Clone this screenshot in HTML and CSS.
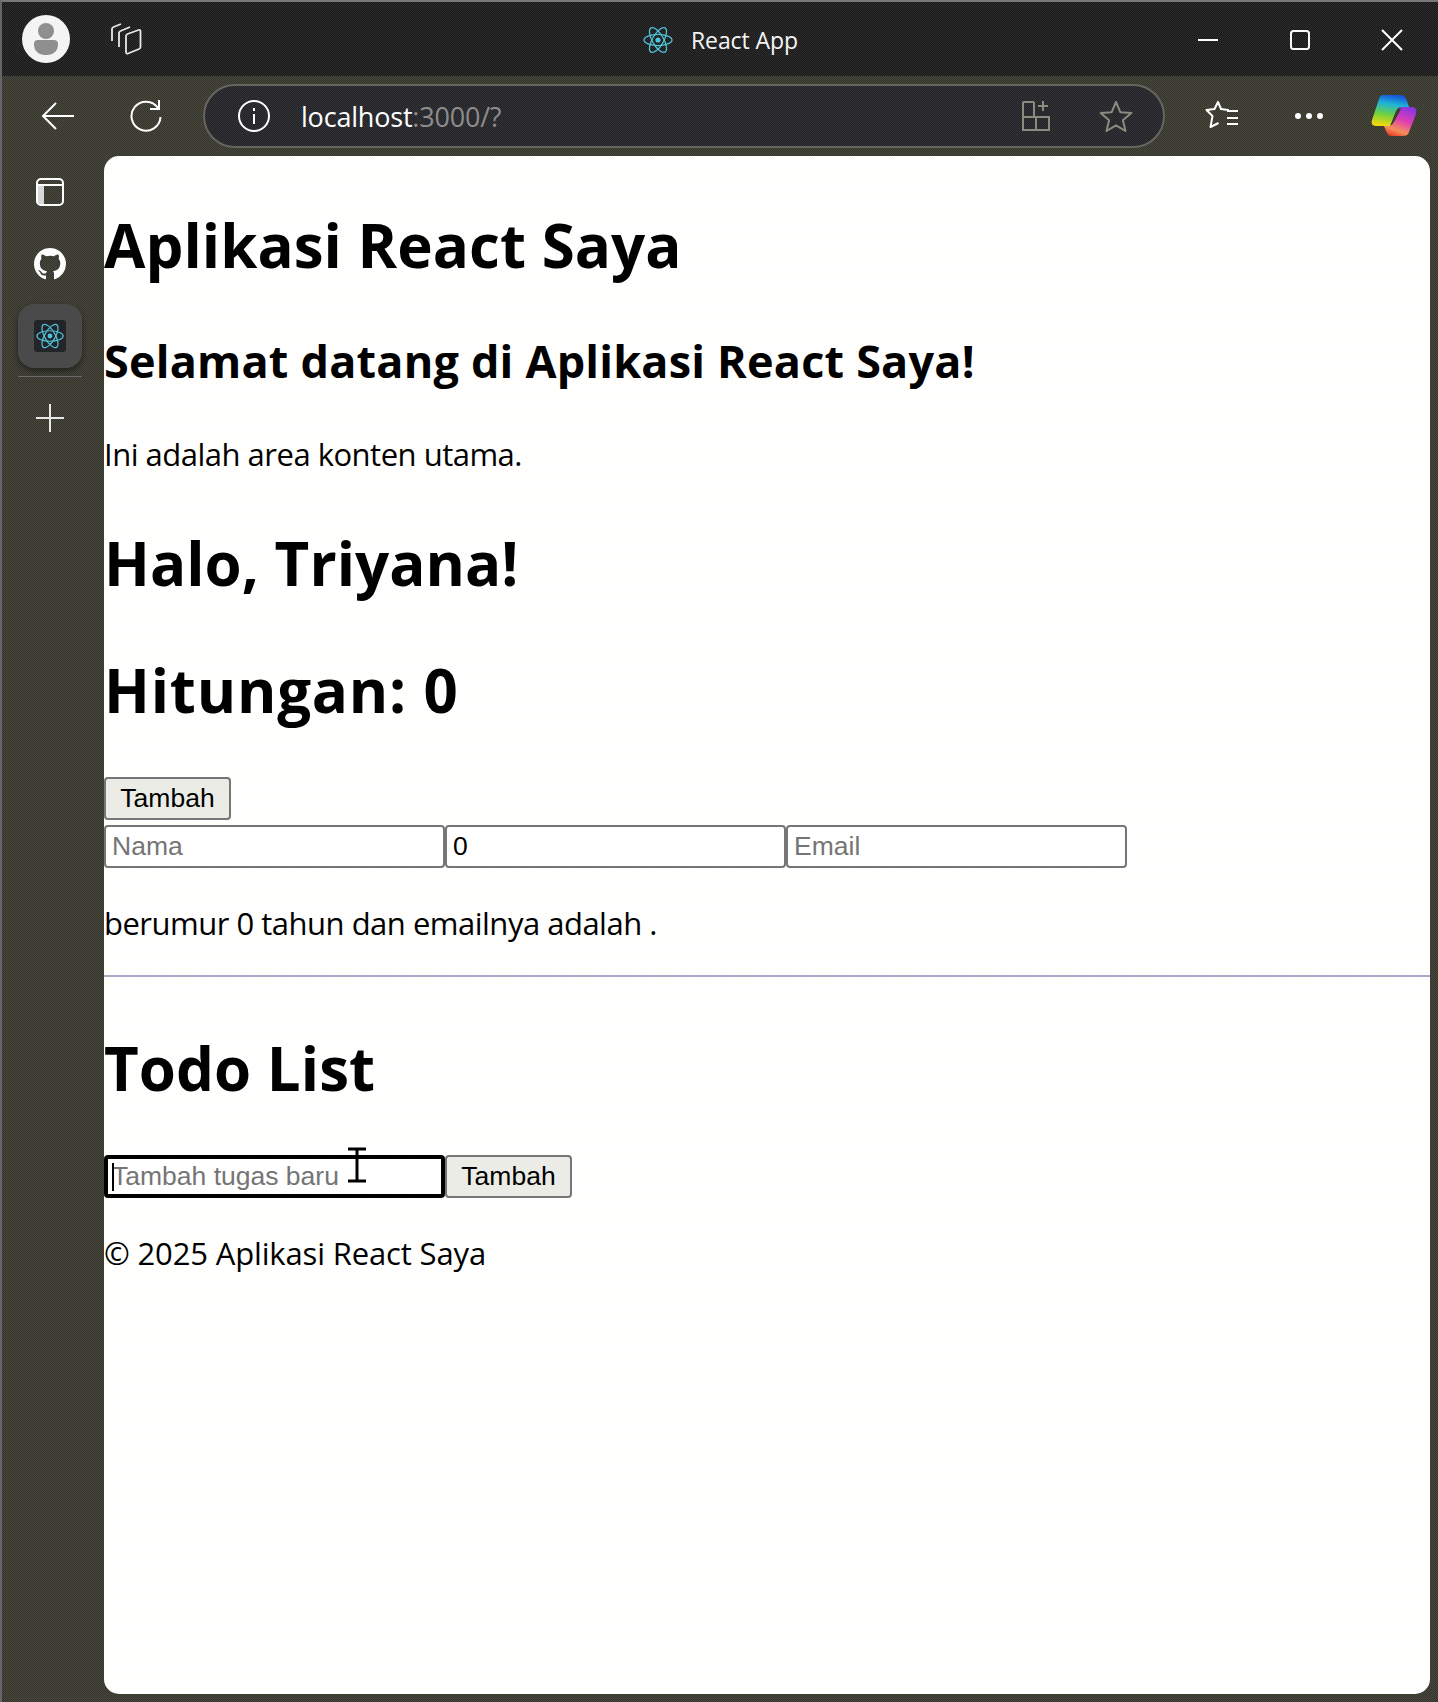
FILE: index.html
```html
<!DOCTYPE html>
<html lang="en">
<head>
  <meta charset="UTF-8">
  <meta name="viewport" content="width=device-width, initial-scale=1.0">
  <title>React App</title>
  <link rel="stylesheet" href="styles.css">
</head>
<body>
  <svg class="defs" width="0" height="0">
    <defs>
      <g id="react" fill="none" stroke="#4fc3d9" stroke-width="1.3">
        <ellipse cx="16" cy="16" rx="14" ry="5.6"/>
        <ellipse cx="16" cy="16" rx="14" ry="5.6" transform="rotate(60 16 16)"/>
        <ellipse cx="16" cy="16" rx="14" ry="5.6" transform="rotate(120 16 16)"/>
        <circle cx="16" cy="16" r="2.6" fill="#4fc3d9" stroke="none"/>
      </g>
      <linearGradient id="copA" x1="0.6" y1="0" x2="0.4" y2="1">
        <stop offset="0" stop-color="#1553d8"/>
        <stop offset="0.3" stop-color="#1fb4d8"/>
        <stop offset="0.65" stop-color="#6fd23c"/>
        <stop offset="1" stop-color="#f4d80f"/>
      </linearGradient>
      <linearGradient id="copB" x1="0.7" y1="0" x2="0.3" y2="1">
        <stop offset="0" stop-color="#8a35e0"/>
        <stop offset="0.45" stop-color="#e03fb0"/>
        <stop offset="0.8" stop-color="#f5905a"/>
        <stop offset="1" stop-color="#e8452a"/>
      </linearGradient>
    </defs>
  </svg>

  <div class="window">
    <header class="titlebar">
      <div class="avatar">
        <svg width="30" height="34" viewBox="0 0 30 34"><circle cx="15" cy="9" r="8" fill="#8f8f8f"/><path d="M3 22a4 4 0 0 1 4-4h16a4 4 0 0 1 4 4v1a10 10 0 0 1-10 10h-4a10 10 0 0 1-10-10z" fill="#8f8f8f"/></svg>
      </div>
      <svg class="tabs-icon" width="32" height="32" viewBox="0 0 32 32" fill="none" stroke="#e8e8e8" stroke-width="1.8" stroke-linejoin="round">
        <path d="M2 18V6c0-1 .5-1.500 1.500-2L11 1"/>
        <path d="M9 24V10c0-1 .5-1.500 1.500-2L20 4"/>
        <path d="M16 13c0-1 .5-1.500 1.500-2l11-4c1-.4 2 .2 2 1.200V24c0 1-.5 1.500-1.500 2l-11 4.500c-1 .4-2-.2-2-1.200z"/>
      </svg>
      <div class="tab-title">
        <svg width="32" height="32" viewBox="0 0 32 32"><use href="#react"/></svg>
        <span>React App</span>
      </div>
      <div class="controls">
        <svg width="22" height="22" viewBox="0 0 22 22"><path d="M1 11h20" stroke="#fff" stroke-width="2"/></svg>
        <svg width="22" height="22" viewBox="0 0 22 22" fill="none"><rect x="2" y="2" width="18" height="18" rx="2.500" stroke="#fff" stroke-width="2"/></svg>
        <svg width="22" height="22" viewBox="0 0 22 22"><path d="M1 1l20 20M21 1L1 21" stroke="#fff" stroke-width="2"/></svg>
      </div>
    </header>

    <nav class="toolbar">
      <svg class="back" width="34" height="30" viewBox="0 0 34 30" fill="none" stroke="#fff" stroke-width="2"><path d="M33 15H2M15 2L2 15l13 13"/></svg>
      <svg class="reload" width="34" height="34" viewBox="0 0 34 34" fill="none" stroke="#fff" stroke-width="2"><path d="M29 9A14.500 14.500 0 1 0 31.500 18"/><path d="M21 10h9V1"/></svg>
      <div class="address">
        <svg width="34" height="34" viewBox="0 0 34 34" fill="none" stroke="#fff" stroke-width="2"><circle cx="17" cy="17" r="15"/><path d="M17 15v10M17 9v3"/></svg>
        <span class="url">localhost<span class="url-dim">:3000/?</span></span>
        <svg class="apps" width="30" height="32" viewBox="0 0 30 32" fill="none" stroke="#8b8b80" stroke-width="2"><path d="M2 17h26v13H2zM15 17v13M2 17V3a1 1 0 0 1 1-1h9a1 1 0 0 1 1 1v14M22 1v10M17 6h10"/></svg>
        <svg class="star" width="34" height="32" viewBox="0 0 34 32" fill="none" stroke="#8b8b80" stroke-width="2" stroke-linejoin="round"><path d="M17 2l4.300 10.200 11 .9-8.400 7.200 2.600 10.700L17 25.300 7.500 31l2.600-10.700L1.700 13.100l11-.9z"/></svg>
      </div>
      <svg class="favs" width="34" height="32" viewBox="0 0 34 32" fill="none" stroke="#fff" stroke-width="2" stroke-linejoin="round"><path d="M24 11l-1-1-7-1-3-7-3.500 7-8 1 6 6-2 11 8-4"/><path d="M22 11h11M22 18h11M22 24h11"/></svg>
      <div class="dots"><i></i><i></i><i></i></div>
      <svg class="copilot" width="46" height="42" viewBox="0 0 46 42">
        <path d="M28 12H41C45 12 46 15 45 19L38 37C37 40 35 41 32 41H21C18 41 16 39 15 36L13 31H17C20 31 22 29 23 27L29 16C30 14 30 13 28 12Z" fill="url(#copB)"/>
        <path d="M12 0H30C33 0 35 2 36 6L38 12H30C28 12 26 14 25 16L19 31H5C1 31 0 28 1 25L8 4C9 1 10 0 12 0Z" fill="url(#copA)"/>
      </svg>
    </nav>

    <div class="workspace">
      <aside class="sidebar">
        <svg class="side-tabs" width="28" height="28" viewBox="0 0 28 28" fill="none" stroke="#fff" stroke-width="2"><rect x="1" y="1" width="26" height="26" rx="4"/><path d="M1 7h26"/><path d="M2 8h6v18H2z" fill="#d8d8d8" stroke="none"/></svg>
        <svg class="side-github" width="32" height="32" viewBox="0 0 16 16"><path fill="#fff" d="M8 0C3.580 0 0 3.580 0 8c0 3.540 2.290 6.530 5.470 7.590.4.070.55-.17.55-.38 0-.19-.01-.82-.01-1.490-2.010.37-2.530-.49-2.690-.94-.09-.23-.48-.94-.82-1.130-.28-.15-.68-.52-.01-.53.63-.01 1.080.58 1.230.82.72 1.210 1.870.87 2.330.66.07-.52.28-.87.51-1.070-1.780-.2-3.640-.89-3.640-3.950 0-.87.31-1.590.82-2.150-.08-.2-.36-1.020.08-2.120 0 0 .67-.21 2.200.82.64-.18 1.320-.27 2-.27.68 0 1.360.09 2 .27 1.530-1.040 2.200-.82 2.200-.82.44 1.100.16 1.920.08 2.120.51.56.82 1.270.82 2.150 0 3.070-1.870 3.750-3.650 3.950.29.25.54.73.54 1.480 0 1.070-.01 1.930-.01 2.200 0 .21.15.46.55.38A8.013 8.013 0 0 0 16 8c0-4.420-3.580-8-8-8z"/></svg>
        <div class="side-active">
          <div class="side-favicon"><svg width="30" height="30" viewBox="0 0 32 32"><use href="#react"/></svg></div>
        </div>
        <div class="side-line"></div>
        <svg class="side-plus" width="28" height="28" viewBox="0 0 28 28"><path d="M14 0v28M0 14h28" stroke="#e8e8e8" stroke-width="2"/></svg>
      </aside>

      <main class="page">
        <h1 class="title">Aplikasi React Saya</h1>
        <h2 class="welcome">Selamat datang di Aplikasi React Saya!</h2>
        <p class="intro">Ini adalah area konten utama.</p>
        <h1 class="hello">Halo, Triyana!</h1>
        <h1 class="count">Hitungan: 0</h1>
        <button class="btn count-btn">Tambah</button>
        <div class="fields">
          <input class="field" type="text" placeholder="Nama">
          <input class="field" type="text" value="0">
          <input class="field" type="text" placeholder="Email">
        </div>
        <p class="summary">berumur 0 tahun dan emailnya adalah .</p>
        <hr class="rule">
        <h1 class="todo">Todo List</h1>
        <div class="todo-form">
          <div class="focus-wrap">
            <input class="field field-focus" type="text" placeholder="Tambah tugas baru">
            <span class="caret"></span>
            <svg class="ibeam" width="20" height="36" viewBox="0 0 20 36" fill="none" stroke="#000" stroke-width="3"><path d="M1 2h18M1 34h18M10 2v32"/></svg>
          </div>
          <button class="btn">Tambah</button>
        </div>
        <p class="footer">© 2025 Aplikasi React Saya</p>
      </main>
    </div>
  </div>
</body>
</html>
```

FILE: styles.css
```css
* {
  box-sizing: border-box;
}
html, body {
  margin: 0;
  height: 100%;
}
body {
  font-family: "Open Sans", "Noto Sans", sans-serif;
  overflow: hidden;
}
.defs {
  position: absolute;
}
.window {
  height: 1702px;
  display: flex;
  flex-direction: column;
  border-top: 2px solid #77777a;
  border-left: 2px solid #66666a;
  background-color: #3e3e36;
  background-image: repeating-conic-gradient(#4b4b2a 0 25%, #313140 0 50%);
  background-size: 2px 2px;
}

/* title bar */
.titlebar {
  height: 74px;
  flex: none;
  display: flex;
  align-items: center;
  background-color: #232323;
  background-image: repeating-conic-gradient(#191919 0 25%, #2d2d2d 0 50%);
  background-size: 2px 2px;
}
.avatar {
  width: 48px;
  height: 48px;
  margin-left: 20px;
  border-radius: 50%;
  background: #f4f4f4;
  display: flex;
  align-items: center;
  justify-content: center;
  overflow: hidden;
}
.tabs-icon {
  margin-left: 40px;
}
.tab-title {
  margin-left: 500px;
  margin-top: 1px;
  display: flex;
  align-items: center;
  gap: 17px;
  color: #f5f5f5;
  font-size: 23px;
  letter-spacing: -0.1px;
}
.controls {
  margin-left: auto;
  margin-right: 35px;
  margin-top: 2px;
  display: flex;
  gap: 70px;
}

/* toolbar */
.toolbar {
  height: 80px;
  flex: none;
  display: flex;
  align-items: center;
}
.back {
  margin-left: 39px;
}
.reload {
  margin-left: 54px;
}
.address {
  width: 962px;
  height: 64px;
  margin-left: 40px;
  padding: 0 30px 0 32px;
  display: flex;
  align-items: center;
  border: 2px solid #666660;
  border-radius: 32px;
  background-color: #2a2a2a;
  background-image: repeating-conic-gradient(#33332e 0 25%, #222230 0 50%);
  background-size: 2px 2px;
}
.url {
  margin-left: 30px;
  color: #fff;
  font-size: 27px;
  letter-spacing: -0.2px;
}
.url-dim {
  color: #8d8d8d;
}
.apps {
  margin-left: auto;
}
.star {
  margin-left: 48px;
}
.favs {
  margin-left: 40px;
}
.dots {
  margin-left: 56px;
  display: flex;
  gap: 5px;
}
.dots i {
  width: 6px;
  height: 6px;
  border-radius: 50%;
  background: #fff;
}
.copilot {
  margin-left: 48px;
}

/* sidebar and page */
.workspace {
  flex: 1;
  display: flex;
  padding: 0 8px 8px 0;
  min-height: 0;
}
.sidebar {
  width: 102px;
  flex: none;
  display: flex;
  flex-direction: column;
  align-items: center;
  padding: 22px 6px 0 0;
}
.side-github {
  margin-top: 42px;
}
.side-active {
  width: 64px;
  height: 64px;
  margin-top: 24px;
  border-radius: 16px;
  background: #4a4a4a;
  box-shadow: 0 3px 6px rgba(0, 0, 0, 0.45);
  display: flex;
  align-items: center;
  justify-content: center;
}
.side-favicon {
  width: 32px;
  height: 32px;
  border-radius: 3px;
  background: #23232a;
  display: flex;
  align-items: center;
  justify-content: center;
}
.side-line {
  width: 64px;
  height: 1px;
  margin-top: 8px;
  background: #6a6a6a;
}
.side-plus {
  margin-top: 27px;
}
.page {
  flex: 1;
  min-width: 0;
  background: #fff;
  background-image: radial-gradient(#fffbd8 0.7px, transparent 1px);
  background-size: 5px 5px;
  border-radius: 15px;
  color: #000;
  overflow: hidden;
}
h1, h2, p {
  margin: 0;
}
h1 {
  font-size: 60px;
  line-height: 82px;
  font-weight: 700;
  letter-spacing: 0.05px;
}
.title {
  margin-top: 48px;
}
.welcome {
  margin-top: 44px;
  font-size: 45px;
  line-height: 62px;
  letter-spacing: 0.2px;
}
.intro, .summary, .footer {
  font-size: 31px;
  line-height: 41px;
  letter-spacing: -0.5px;
}
.intro {
  margin-top: 42px;
}
.hello {
  margin-top: 47px;
}
.count {
  margin-top: 45px;
  letter-spacing: 0.8px;
}
.btn {
  height: 43px;
  width: 127px;
  padding: 0;
  font-family: "Liberation Sans", Arial, sans-serif;
  font-size: 26.5px;
  color: #000;
  background: #ececE6;
  border: 2px solid #767676;
  border-radius: 4px;
}
.count-btn {
  display: block;
  margin-top: 46px;
}
.fields {
  margin-top: 5px;
  display: flex;
}
.field {
  width: 341px;
  height: 43px;
  padding: 0 6px;
  font-family: "Liberation Sans", Arial, sans-serif;
  font-size: 26.5px;
  color: #000;
  background: #fff;
  border: 2px solid #767676;
  border-radius: 4px;
  outline: none;
}
.field::placeholder {
  color: #757575;
}
.summary {
  margin-top: 35px;
}
.rule {
  margin: 31px 0 0;
  height: 2px;
  border: none;
  background: #a9a9c4;
}
.todo {
  margin-top: 50px;
}
.todo-form {
  margin-top: 46px;
  display: flex;
}
.focus-wrap {
  position: relative;
  width: 341px;
}
.field-focus {
  border: 4px solid #000;
  padding: 0 4px;
}
.caret {
  position: absolute;
  left: 8px;
  top: 8px;
  width: 2px;
  height: 28px;
  background: #000;
}
.ibeam {
  position: absolute;
  left: 243px;
  top: -8px;
}
.footer {
  margin-top: 35px;
  letter-spacing: -0.15px;
}
```
